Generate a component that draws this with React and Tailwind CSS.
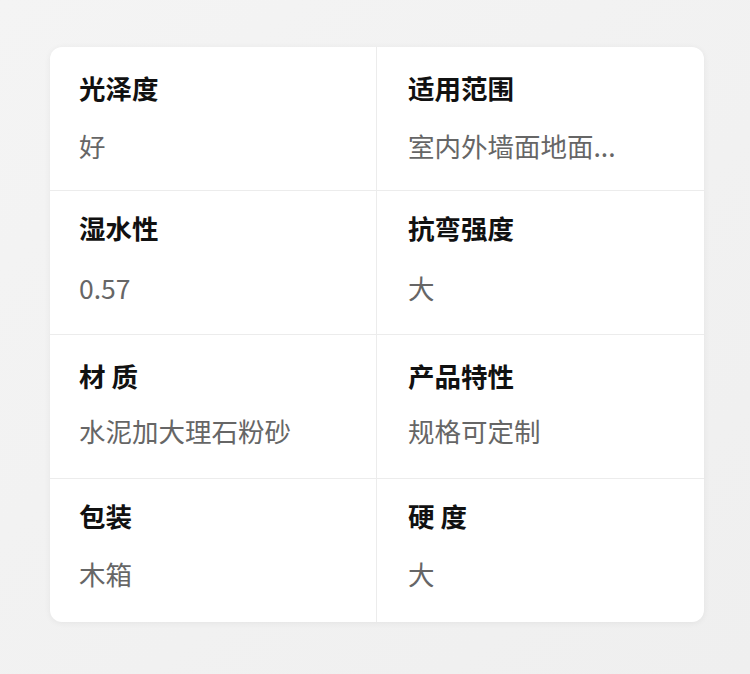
const specs = [
  { cells: ["光泽度", "好", "适用范围", "室内外墙面地面..."], pt: "pt-[26px]", mt: "mt-[28px]" },
  { cells: ["湿水性", "0.57", "抗弯强度", "大"], pt: "pt-[22px]", mt: "mt-[30px]" },
  { cells: ["材 质", "水泥加大理石粉砂", "产品特性", "规格可定制"], pt: "pt-[26px]", mt: "mt-[25px]" },
  { cells: ["包装", "木箱", "硬 度", "大"], pt: "pt-[22px]", mt: "mt-[28px]" },
];

function Cell({ label, value, right, pt, mt }) {
  return (
    <div className={`h-[143px] ${pt} ${right ? "pl-[31px]" : "pl-[29px] border-r border-[#ececec]"}`}>
      <div className="text-[26.5px] leading-[30px] font-bold text-[#111]">{label}</div>
      <div className={`${mt} text-[26.5px] leading-[30px] text-[#666] whitespace-pre`}>{value}</div>
    </div>
  );
}

export default function App() {
  return (
    <div
      className="w-[750px] h-[674px] bg-gradient-to-br from-[#f4f4f4] to-[#efefef] pt-[47px] pl-[50px]"
      style={{ fontFamily: '"Noto Sans CJK SC", "Noto Sans", sans-serif' }}
    >
      <div className="w-[654px] bg-white rounded-[12px] shadow-[0_1px_6px_rgba(0,0,0,0.06)] overflow-hidden">
        {specs.map((row, i) => (
          <div
            key={i}
            className={`grid grid-cols-[327px_1fr] ${i > 0 ? "border-t border-[#ececec]" : ""}`}
          >
            <Cell label={row.cells[0]} value={row.cells[1]} pt={row.pt} mt={row.mt} />
            <Cell label={row.cells[2]} value={row.cells[3]} pt={row.pt} mt={row.mt} right />
          </div>
        ))}
      </div>
    </div>
  );
}
